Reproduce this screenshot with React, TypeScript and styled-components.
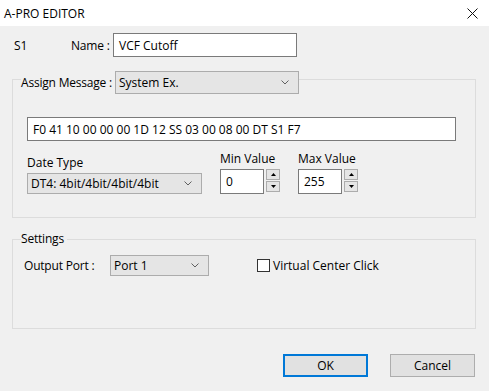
import styled, { createGlobalStyle } from 'styled-components';

const GlobalStyle = createGlobalStyle`
  html, body {
    margin: 0;
    padding: 0;
    background: #ffffff;
  }
  * {
    box-sizing: border-box;
  }
`;

const Window = styled.div`
  width: 489px;
  height: 391px;
  display: flex;
  flex-direction: column;
  background: #f0f0f0;
  font-family: 'Open Sans', 'Noto Sans', sans-serif;
  font-size: 12px;
  color: #000;
  overflow: hidden;
`;

const TitleBar = styled.div`
  height: 26px;
  flex: none;
  display: flex;
  align-items: center;
  justify-content: space-between;
  padding: 0 11px 0 4px;
  background: #ffffff;
`;

const CloseIcon = () => (
  <svg width="11" height="11" viewBox="0 0 11 11">
    <path d="M0.5 0.5 L10.5 10.5 M10.5 0.5 L0.5 10.5" stroke="#111" strokeWidth="1" />
  </svg>
);

const Body = styled.div`
  flex: 1;
  display: flex;
  flex-direction: column;
  padding: 7px 13px 0 12px;
`;

const NameRow = styled.div`
  display: flex;
  align-items: center;
  height: 24px;
`;

const PlainLabel = styled.span<{ $width?: number; $indent?: number }>`
  flex: none;
  width: ${p => (p.$width ? `${p.$width}px` : 'auto')};
  padding-left: ${p => p.$indent ?? 0}px;
  letter-spacing: -0.2px;
  white-space: nowrap;
`;

const TextBox = styled.div<{ $width: number; $height?: number }>`
  flex: none;
  width: ${p => p.$width}px;
  height: ${p => p.$height ?? 24}px;
  display: flex;
  align-items: center;
  padding-left: 5px;
  background: #ffffff;
  border: 1px solid #7a7a7a;
  white-space: nowrap;
`;

const ComboBox = styled.div<{ $width: number; $height?: number }>`
  flex: none;
  width: ${p => p.$width}px;
  height: ${p => p.$height ?? 21}px;
  display: flex;
  align-items: center;
  justify-content: space-between;
  padding: 0 9px 0 3px;
  background: #e5e5e5;
  border: 1px solid #acacac;
  white-space: nowrap;
`;

const Chevron = () => (
  <svg width="8" height="5" viewBox="0 0 8 5">
    <path d="M0.5 0.5 L4 4 L7.5 0.5" fill="none" stroke="#606060" strokeWidth="1" />
  </svg>
);

const Combo = ({ value, width, height }: { value: string; width: number; height?: number }) => (
  <ComboBox $width={width} $height={height}>
    <span>{value}</span>
    <Chevron />
  </ComboBox>
);

const Group = styled.div<{ $top: number; $height: number }>`
  margin-top: ${p => p.$top}px;
  height: ${p => p.$height}px;
  border: 1px solid #dcdcdc;
  display: flex;
  flex-direction: column;
  padding: 0 0 0 14px;
`;

const GroupHeader = styled.div<{ $lift: number }>`
  display: flex;
  align-items: center;
  margin: -${p => p.$lift}px 0 0 -6px;
`;

const Legend = styled.span`
  flex: none;
  padding: 0 3px 0 0;
  line-height: 16px;
  letter-spacing: -0.2px;
  background: #f0f0f0;
  white-space: nowrap;
`;

const FieldRow = styled.div<{ $top: number }>`
  display: flex;
  align-items: flex-end;
  margin-top: ${p => p.$top}px;
`;

const Field = styled.div<{ $width: number }>`
  flex: none;
  width: ${p => p.$width}px;
  display: flex;
  flex-direction: column;
  gap: 2px;
`;

const FieldLabel = styled.span`
  line-height: 16px;
  white-space: nowrap;
`;

const SpinWrap = styled.div`
  display: flex;
  gap: 2px;
`;

const SpinButtons = styled.div`
  width: 14px;
  height: 23px;
  display: flex;
  flex-direction: column;
  justify-content: space-between;
`;

const SpinButton = styled.div`
  height: 11px;
  display: flex;
  align-items: center;
  justify-content: center;
  background: #e5e5e5;
  border: 1px solid #acacac;
`;

const Arrow = ({ up }: { up?: boolean }) => (
  <svg width="5" height="3" viewBox="0 0 5 3">
    <path d={up ? 'M0 3 L2.5 0 L5 3 Z' : 'M0 0 L5 0 L2.5 3 Z'} fill="#000" />
  </svg>
);

const Spin = ({ value }: { value: string }) => (
  <SpinWrap>
    <TextBox $width={44} $height={25}>{value}</TextBox>
    <SpinButtons>
      <SpinButton><Arrow up /></SpinButton>
      <SpinButton><Arrow /></SpinButton>
    </SpinButtons>
  </SpinWrap>
);

const SettingsRow = styled.div`
  display: flex;
  align-items: center;
  margin: 8px 0 0 -3px;
`;

const CheckLabel = styled.label`
  display: flex;
  align-items: center;
  gap: 3px;
  margin-left: 48px;
  white-space: nowrap;
`;

const CheckBox = styled.span`
  width: 13px;
  height: 13px;
  background: #ffffff;
  border: 1px solid #333333;
`;

const ButtonRow = styled.div`
  display: flex;
  justify-content: flex-end;
  gap: 22px;
  margin-top: 25px;
  padding-right: 1px;
`;

const Button = styled.button<{ $primary?: boolean }>`
  width: 85px;
  height: 23px;
  font: inherit;
  color: #000;
  background: #e1e1e1;
  border: ${p => (p.$primary ? '2px solid #0078d7' : '1px solid #adadad')};
  padding: 0;
`;

export default function App() {
  return (
    <>
      <GlobalStyle />
      <Window>
        <TitleBar>
          <span>A-PRO EDITOR</span>
          <CloseIcon />
        </TitleBar>
        <Body>
          <NameRow>
            <PlainLabel $width={59} $indent={2}>S1</PlainLabel>
            <PlainLabel $width={42}>Name :</PlainLabel>
            <TextBox $width={184}>VCF Cutoff</TextBox>
          </NameRow>

          <Group $top={22} $height={139}>
            <GroupHeader $lift={9}>
              <Legend>Assign Message :</Legend>
              <Combo value="System Ex." width={184} height={23} />
            </GroupHeader>
            <TextBox $width={429} style={{ marginTop: 23 }}>
              F0 41 10 00 00 00 1D 12 SS 03 00 08 00 DT S1 F7
            </TextBox>
            <FieldRow $top={10}>
              <Field $width={193}>
                <FieldLabel>Date Type</FieldLabel>
                <Combo value="DT4: 4bit/4bit/4bit/4bit" width={175} />
              </Field>
              <Field $width={78}>
                <FieldLabel>Min Value</FieldLabel>
                <Spin value="0" />
              </Field>
              <Field $width={78}>
                <FieldLabel>Max Value</FieldLabel>
                <Spin value="255" />
              </Field>
            </FieldRow>
          </Group>

          <Group $top={21} $height={90}>
            <GroupHeader $lift={9}>
              <Legend>Settings</Legend>
            </GroupHeader>
            <SettingsRow>
              <PlainLabel $width={86}>Output Port :</PlainLabel>
              <Combo value="Port 1" width={99} />
              <CheckLabel>
                <CheckBox />
                Virtual Center Click
              </CheckLabel>
            </SettingsRow>
          </Group>

          <ButtonRow>
            <Button $primary>OK</Button>
            <Button>Cancel</Button>
          </ButtonRow>
        </Body>
      </Window>
    </>
  );
}
